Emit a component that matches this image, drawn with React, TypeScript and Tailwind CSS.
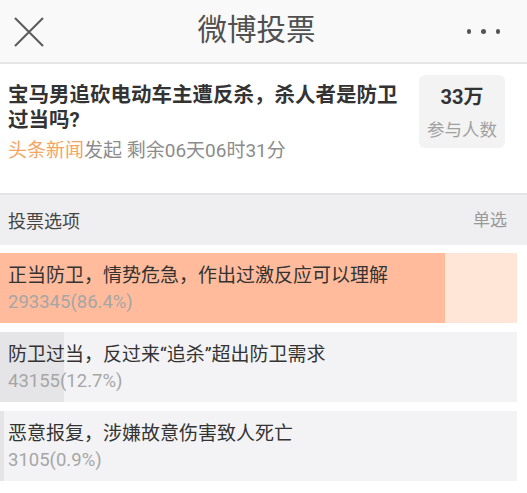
import React from "react";

const font = { fontFamily: 'Roboto, "Noto Sans CJK SC", "Noto Sans", sans-serif' };

function Option({ text, count, pct, fill, fillColor, restColor }: { text: string; count: string; pct: number; fill: number; fillColor: string; restColor: string }) {
  return (
    <div className="relative h-[70px] w-[517px] overflow-hidden" style={{ backgroundColor: restColor }}>
      <div className="absolute left-0 top-0 h-full" style={{ width: `${fill}px`, backgroundColor: fillColor }} />
      <div className="relative flex flex-col pl-[8px] pt-[10px]">
        <div className="text-[19px] leading-[26px] text-[#333]">{text}</div>
        <div className="text-[18.5px] leading-[26px] text-[#a6a6a6]">{count}({pct}%)</div>
      </div>
    </div>
  );
}

export default function App() {
  return (
    <div className="w-[527px] h-[493px] bg-white overflow-hidden" style={font}>
      <div className="h-[64px] bg-[#f9f9f9] flex items-center border-b-[2px] border-[#e6e6e6]">
        <div className="w-[120px] pl-[14px] flex items-center">
          <svg width="30" height="30" viewBox="0 0 30 30" className="mt-[2px]">
            <path d="M1 1 L29 29 M29 1 L1 29" stroke="#5a5a5a" strokeWidth="2" fill="none" />
          </svg>
        </div>
        <div className="flex-1 text-center text-[29.5px] leading-none text-[#505050] pr-[14px]">微博投票</div>
        <div className="w-[120px] flex justify-end gap-[10px] items-center pr-[27px] mt-[1px]">
          <span className="w-[4.5px] h-[4.5px] rounded-full bg-[#555]" />
          <span className="w-[4.5px] h-[4.5px] rounded-full bg-[#555]" />
          <span className="w-[4.5px] h-[4.5px] rounded-full bg-[#555]" />
        </div>
      </div>
      <div className="h-[129px] flex pl-[8px] pr-[22px] pt-[10px]">
        <div className="flex-1 pt-[9px]">
          <div className="text-[20.5px] leading-[25px] font-bold text-[#333]">宝马男追砍电动车主遭反杀，杀人者是防卫过当吗?</div>
          <div className="text-[19px] leading-[26px] text-[#8c8c8c] mt-[5px]">
            <span className="text-[#f5a462]">头条新闻</span>发起 剩余06天06时31分
          </div>
        </div>
        <div className="w-[86px] h-[73px] mt-[1px] ml-[8px] rounded-[6px] bg-[#f3f3f3] flex flex-col items-center pt-[8px]">
          <div className="text-[20px] leading-[28px] font-bold text-[#333]">33万</div>
          <div className="text-[17.5px] leading-[26px] text-[#a0a0a0] mt-[6px]">参与人数</div>
        </div>
      </div>
      <div className="h-[52px] bg-[#efeff1] border-t-[2px] border-[#e4e4e6] flex items-center justify-between pl-[8px] pr-[20px]">
        <span className="text-[18px] text-[#444] mt-[2px]">投票选项</span>
        <span className="text-[17px] text-[#999] mt-[2px]">单选</span>
      </div>
      <div className="flex flex-col gap-[9px] pt-[8px]">
        <Option text="正当防卫，情势危急，作出过激反应可以理解" count="293345" pct={86.4} fill={445} fillColor="#ffbb9b" restColor="#ffe6d6" />
        <Option text="防卫过当，反过来“追杀”超出防卫需求" count="43155" pct={12.7} fill={64} fillColor="#e5e5e7" restColor="#f3f3f5" />
        <Option text="恶意报复，涉嫌故意伤害致人死亡" count="3105" pct={0.9} fill={4} fillColor="#e5e5e7" restColor="#f3f3f5" />
      </div>
    </div>
  );
}
